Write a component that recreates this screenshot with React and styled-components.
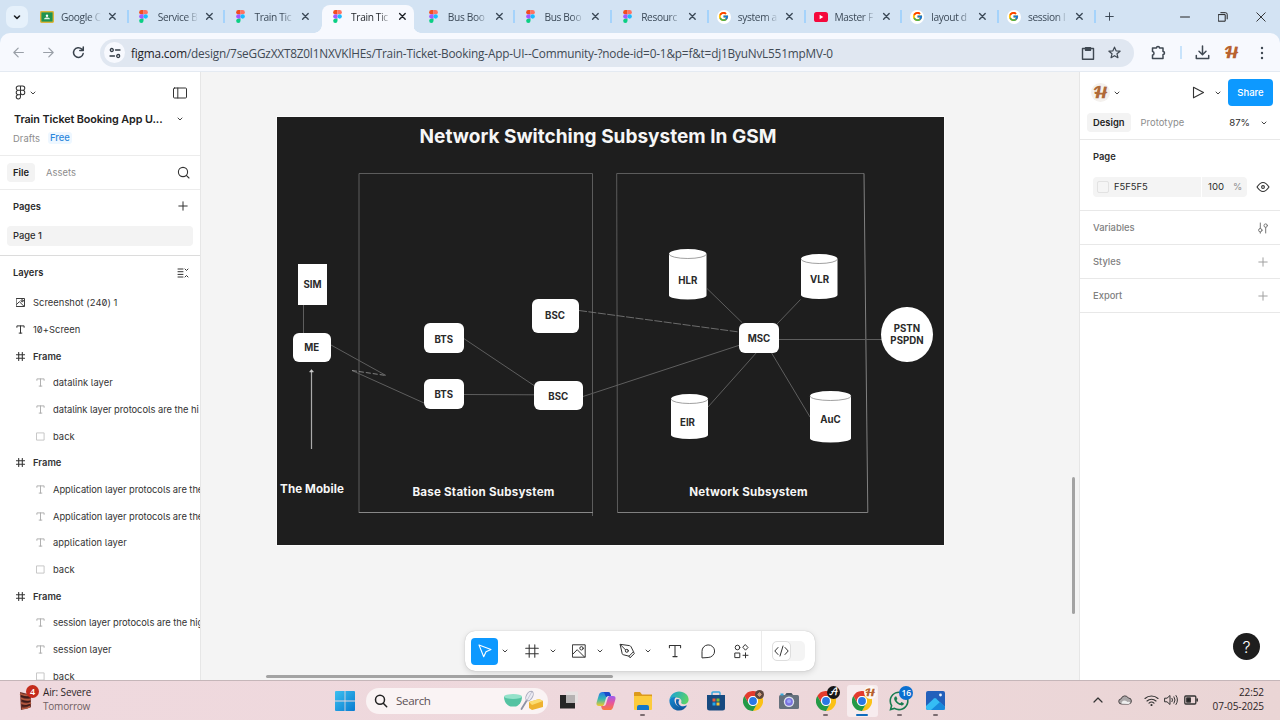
import React from "react";
import styled, { createGlobalStyle, css } from "styled-components";
import { FcGoogle } from "react-icons/fc";
import { FaWhatsapp } from "react-icons/fa";

const Global = createGlobalStyle`
  * { box-sizing: border-box; }
  html, body { margin: 0; padding: 0; overflow: hidden; }
  body { font-family: Inter, "Liberation Sans", sans-serif; color: #2c2c2c; background: #fff; }
  svg { display: block; flex: none; }
`;

const system = css`font-family: "Open Sans", "Noto Sans", sans-serif;`;

const Screen = styled.div`
  width: 1280px; height: 720px; display: flex; flex-direction: column; overflow: hidden; background: #fff;
`;

/* ---------- browser chrome ---------- */

const TabStrip = styled.div`
  height: 33px; flex: none; display: flex; align-items: stretch; background: #d3e3f3; padding-left: 6px;
`;
const TabSearch = styled.div`
  width: 22px; height: 22px; margin-top: 6px; border-radius: 7px; background: #e6f1fb;
  display: flex; align-items: center; justify-content: center;
`;
const TabList = styled.div`display: flex; margin-left: 3px;`;
const Tab = styled.div`
  ${system}
  position: relative; width: 96.7px; height: 33px; display: flex; align-items: center;
  padding: 0 0 0 9px; font-size: 10.2px; letter-spacing: -0.35px; color: #3c4a58;
  ${(p) => !p.$active && !p.$quiet && css`
    &::after { content: ""; position: absolute; right: -1px; top: 10px; width: 2px; height: 13px; background: #a5d3fb; }
  `}
  ${(p) => p.$active && css`
    color: #1f2328;
    &::before { content: ""; position: absolute; left: -7px; right: -3px; bottom: 0; height: 12px;
      background: radial-gradient(circle at 0 0, transparent 7.5px, #f7f9fe 8px) left bottom / 8px 8px no-repeat,
        radial-gradient(circle at 100% 0, transparent 7.5px, #f7f9fe 8px) right bottom / 8px 8px no-repeat; }
  `}
`;
const TabFace = styled.div`
  position: relative; display: flex; align-items: center; height: 28px; margin: 5px 0 0 -8px; padding: 0 0 5px 8px;
  width: 92px; border-radius: 8px 8px 0 0; background: ${(p) => (p.$active ? "#f7f9fe" : "transparent")};
`;
const TabTitle = styled.span`
  width: 42px; margin-left: 7px; white-space: nowrap;
  mask-image: linear-gradient(90deg, #000 66%, transparent 96%);
`;
const TabIcon = styled.span`width: 14px; display: flex; justify-content: center;`;
const TabClose = styled.span`margin-left: 5px; display: flex;`;
const WhiteDisc = styled.span`
  width: 14px; height: 14px; border-radius: 50%; background: #fff; display: flex; align-items: center; justify-content: center;
`;
const NewTab = styled.div`display: flex; align-items: center; padding-left: 10px;`;
const WindowButtons = styled.div`
  margin-left: auto; display: flex; align-items: center; gap: 28px; padding-right: 14px;
`;

const Toolbar = styled.div`
  height: 39px; flex: none; background: #d3e3f3; border-bottom: 1px solid #e4eaf2;
`;
const ToolbarInner = styled.div`
  height: 38px; display: flex; align-items: center; background: #f7f9fe; border-radius: 10px 10px 0 0; padding: 1px 12px 0 12px;
`;
const NavButtons = styled.div`display: flex; align-items: center; gap: 17px; width: 88px;`;
const Omnibox = styled.div`
  ${system}
  height: 28px; width: 1034px; border-radius: 14px; background: #e0e7f1; display: flex; align-items: center; padding: 0 13px 0 4px;
`;
const SiteInfo = styled.span`
  width: 21px; height: 21px; border-radius: 50%; background: #f7f9fe; display: flex; align-items: center; justify-content: center;
`;
const Url = styled.span`
  margin-left: 6px; font-size: 11.8px; letter-spacing: -0.19px; white-space: nowrap; color: #414a54; flex: 1;
  b { font-weight: 400; color: #1f2328; }
`;
const OmniActions = styled.span`display: flex; gap: 13px; align-items: center;`;
const BrowserActions = styled.div`display: flex; align-items: center; margin-left: auto;`;
const ActionRule = styled.span`width: 2px; height: 13px; background: #c8e3fb; margin: 0 13px 0 14px;`;
const Script = styled.span`
  font-family: "DejaVu Serif", "DejaVu Sans", "DejaVu Math TeX Gyre", serif; font-weight: 700; font-size: ${(p) => p.$size}px; line-height: 1;
  color: ${(p) => p.$color || "#b8622f"};
`;

/* ---------- editor ---------- */

const Workspace = styled.div`height: 608px; flex: none; display: flex;`;
const LeftPanel = styled.aside`
  width: 201px; flex: none; border-right: 1px solid #e6e6e6; background: #fff; overflow: hidden; display: flex; flex-direction: column;
`;
const FileHead = styled.div`height: 84px; flex: none; border-bottom: 1px solid #ececec; padding: 0 13px; display: flex; flex-direction: column;`;
const HeadRow = styled.div`display: flex; align-items: center; height: ${(p) => p.$h}px; ${(p) => p.$top && `margin-top:${p.$top}px;`}`;
const Push = styled.span`margin-left: auto; display: flex; align-items: center;`;
const FileName = styled.span`font-size: 10.8px; font-weight: 600; letter-spacing: -0.1px; color: #222; white-space: nowrap; padding-left: 1px;`;
const Muted = styled.span`font-size: ${(p) => p.$size || 9.4}px; color: #8c8c8c; letter-spacing: 0.05px;`;
const FreeBadge = styled.span`
  margin-left: 8px; padding: 0 2px; height: 12px; line-height: 12px; border-radius: 3px; font-size: 9.4px; font-weight: 500; background: #eef7ff; color: #2b86dc;
`;
const PanelTabs = styled.div`height: 34px; flex: none; border-bottom: 1px solid #ececec; display: flex; align-items: center; padding: 0 10px 0 7px;`;
const Pill = styled.span`
  height: 19px; padding: 0 6px; line-height: 19px; border-radius: 4px; background: #f3f3f3; font-size: 9.4px; font-weight: 600; color: #222;
`;
const SectionHead = styled.div`
  height: ${(p) => p.$h}px; flex: none; display: flex; align-items: center; padding: 0 11px 0 13px; font-size: 9.4px; font-weight: 600; color: #2b2b2b;
`;
const PageSection = styled.div`height: 66px; flex: none; border-bottom: 1px solid #dcdcdc;`;
const PageItem = styled.div`
  height: 20px; margin: 4px 7px 0; padding-left: 6px; border-radius: 4px; background: #f3f3f3; line-height: 20px; font-size: 9.4px; font-weight: 500;
`;
const LayerRow = styled.div`
  height: 26.67px; flex: none; display: flex; align-items: center; padding-left: ${(p) => (p.$child ? 34 : 14)}px;
  font-size: 9.4px; font-weight: ${(p) => (p.$frame ? 600 : 400)}; letter-spacing: ${(p) => (p.$long ? -0.06 : 0.03)}px; color: #333; white-space: nowrap;
  font-feature-settings: "cv05", "zero";
`;
const LayerIcon = styled.span`width: 12px; flex: none; margin-right: 7px; display: flex; justify-content: center;`;

const Canvas = styled.main`
  position: relative; flex: 1; background: #f4f4f4; padding: 45px 0 0 76px; overflow: hidden;
`;
const Board = styled.div`position: relative; width: 667px; height: 427.5px; background: #1e1e1e; outline: 1px solid #fafafa;`;
const Wires = styled.svg`position: absolute; inset: 0;`;
const BoardText = styled.div`
  position: absolute; left: ${(p) => p.$x - 277}px; top: ${(p) => p.$y - 117}px; width: ${(p) => p.$w}px; text-align: center;
  transform: translateY(-50%); font-weight: 700; font-size: ${(p) => p.$size}px; line-height: 1.2; color: #f6f6f6; white-space: nowrap;
  letter-spacing: ${(p) => p.$ls || 0}px;
`;
const Node = styled.div`
  position: absolute; left: ${(p) => p.$x - 277}px; top: ${(p) => p.$y - 117}px; width: ${(p) => p.$w}px; height: ${(p) => p.$h}px;
  border-radius: ${(p) => p.$r ?? "6px"}; background: ${(p) => (p.$clear ? "transparent" : "#fff")};
  display: flex; align-items: center; justify-content: center; text-align: center; padding-top: ${(p) => p.$drop ?? 2}px;
  font-size: ${(p) => p.$size || 9.7}px; line-height: 12px; font-weight: 700; color: #2a2a2a; white-space: pre;
`;
const Thumb = styled.div`
  position: absolute; border-radius: 2px; background: #a3a3a3;
  ${(p) => p.$vertical ? "right: 4px; top: 405px; width: 3px; height: 137px;" : "left: 65px; bottom: 2.5px; width: 347px; height: 3px;"}
`;
const ToolDock = styled.div`
  position: absolute; left: 264px; top: 559px; width: 350px; height: 40px; border-radius: 10px; background: #fff;
  box-shadow: 0 0 1px rgba(0,0,0,.28), 0 2px 6px rgba(0,0,0,.13); display: flex; align-items: center; padding-left: 6px;
`;
const Tool = styled.span`
  width: ${(p) => p.$w}px; flex: none; height: 27px; border-radius: 4px; display: flex; align-items: center; justify-content: center;
  margin-left: ${(p) => p.$shift || 0}px;
  background: ${(p) => (p.$active ? "#0d99ff" : "transparent")};
`;
const DockRule = styled.span`width: 1px; height: 40px; background: #ebebeb; margin-left: -6px;`;
const DevToggle = styled.span`
  width: 33px; height: 20px; margin-left: 10px; border-radius: 5px; background: #f4f4f4; display: flex;
`;
const DevKnob = styled.span`
  width: 19px; height: 20px; border-radius: 5px; background: #fff; border: 1px solid #dedede; display: flex; align-items: center; justify-content: center;
`;

const RightPanel = styled.aside`
  position: relative; width: 201px; flex: none; border-left: 1px solid #e6e6e6; background: #fff;
`;
const ShareHead = styled.div`display: flow-root; height: 68px; border-bottom: 1px solid #e8e8e8; padding: 0 7px;`;
const Avatar = styled.span`
  width: 19px; height: 19px; border-radius: 50%; background: #f4f1ee; display: flex; align-items: center; justify-content: center; margin-left: 4px;
`;
const ShareButton = styled.span`
  width: 45px; height: 27px; margin-left: 7px; border-radius: 4px; background: #0d99ff; color: #fff; font-size: 9.5px; font-weight: 500;
  display: flex; align-items: center; justify-content: center;
`;
const Zoom = styled.span`font-size: 9.6px; color: #2b2b2b; margin-right: 11px;`;
const FillSection = styled.div`height: 71px; border-bottom: 1px solid #e8e8e8; padding: 11px 10px 0 13px; font-size: 9.4px; line-height: 12px; font-weight: 600;`;
const FillRow = styled.div`display: flex; align-items: center; margin-top: 14px; line-height: 14px;`;
const FillField = styled.div`
  width: 154px; height: 20px; border-radius: 4px; background: #f4f4f4; display: flex; align-items: center; font-weight: 400; padding-left: 4px;
`;
const Swatch = styled.span`width: 12px; height: 12px; border: 1px solid #e2e2e2; border-radius: 2px; background: #f5f5f5;`;
const Hex = styled.span`margin-left: 5px; width: 87px; font-size: 9.4px;`;
const Opacity = styled.span`border-left: 1px solid #fff; padding-left: 6px; width: 32px; line-height: 20px; font-size: 9.6px;`;
const PropRow = styled.div`
  height: 34px; border-bottom: 1px solid #e8e8e8; padding: 0 12px 0 13px; display: flex; align-items: center; font-size: 9.4px; font-weight: 500; color: #808080;
`;
const Help = styled.div`
  position: absolute; right: 20px; bottom: 20px; width: 27px; height: 27px; border-radius: 50%; background: #1e1e1e; color: #fff;
  display: flex; align-items: center; justify-content: center; font-size: 16px; font-weight: 300;
`;

/* ---------- taskbar ---------- */

const Taskbar = styled.footer`
  ${system}
  height: 40px; flex: none; display: flex; align-items: center; border-top: 1px solid #c5b6b9;
  background: linear-gradient(90deg, #efd9de 0%, #eed8dc 50%, #ead5d5 100%);
`;
const Weather = styled.div`width: 335px; padding: 0 0 2px 17px; display: flex; align-items: center;`;
const WeatherIcon = styled.span`position: relative; width: 23px; height: 26px; display: flex; align-items: flex-end; margin-top: -4px;`;
const CountBadge = styled.span`
  position: absolute; display: flex; align-items: center; justify-content: center; border-radius: 50%; color: #fff; font-weight: 600;
  width: ${(p) => p.$s}px; height: ${(p) => p.$s}px; right: ${(p) => p.$right}px; top: ${(p) => p.$top}px; background: ${(p) => p.$bg};
  font-size: ${(p) => p.$font}px; line-height: 1;
`;
const WeatherText = styled.div`margin-left: 3px; font-size: 10px; letter-spacing: -0.12px; line-height: 13.2px; color: #2d2426; span { display: block; color: #705f63; letter-spacing: -0.2px; }`;
const SearchBox = styled.div`
  width: 182px; height: 26px; margin-left: 11px; border-radius: 13px; background: #faf3f4; display: flex; align-items: center; padding: 0 3px 0 8px;
  font-size: 11.6px; letter-spacing: -0.35px; color: #5c5154;
  span { margin-left: 8px; flex: 1; }
`;
const AppIcon = styled.span`
  position: relative; width: ${(p) => p.$w || 36.6}px; height: 39px; display: flex; align-items: center; justify-content: center;
  ${(p) => p.$mark && css`
    &::after { content: ""; position: absolute; bottom: 4px; width: ${p.$mark === "on" ? 12 : 5}px; height: 2px; border-radius: 1px;
      background: ${p.$mark === "on" ? "#0f6cbd" : "#7b6c70"}; }
  `}
`;
const ActiveTile = styled.span`
  width: 31px; height: 32px; border-radius: 3px; background: #f7ecee; display: flex; align-items: center; justify-content: center;
`;
const Tray = styled.div`margin-left: auto; display: flex; align-items: center; padding: 0 16px 2px 0;`;
const Clock = styled.div`margin-left: 14px; width: 52px; text-align: right; font-size: 10px; letter-spacing: -0.08px; line-height: 13.4px; color: #2d2426; white-space: nowrap;`;

/* ---------- drawings ---------- */

const Line = ({ w = 16, h = w, box = `0 0 ${w} ${h}`, c = "#333", s = 1, d, children, fill = "none" }) => (
  <svg width={w} height={h} viewBox={box} fill={fill} stroke={c} strokeWidth={s} strokeLinecap="round" strokeLinejoin="round">
    {d && <path d={d} />}
    {children}
  </svg>
);
const Caret = ({ c = "#444", size = 6 }) => <Line w={size} box="0 0 6 6" c={c} d="M1 2l2 2 2-2" />;
const Plus = ({ c = "#333", size = 10 }) => <Line w={size} box="0 0 10 10" c={c} d="M5 .8v8.4M.8 5h8.4" />;
const Cross = ({ c }) => <Line w={9} box="0 0 9 9" c={c} s={1.4} d="M1.6 1.6l5.6 5.600M7.200 1.600l-5.600 5.600" />;

const FigmaLogo = () => (
  <svg width="9" height="13" viewBox="0 0 8 12">
    <path d="M4 0H2a2 2 0 000 4h2z" fill="#f24e1e" />
    <path d="M4 0h2a2 2 0 010 4H4z" fill="#ff7262" />
    <path d="M4 4H2a2 2 0 000 4h2z" fill="#a259ff" />
    <circle cx="6" cy="6" r="2" fill="#1abcfe" />
    <path d="M4 8H2a2 2 0 102 2z" fill="#0acf83" />
  </svg>
);
const Classroom = () => (
  <svg width="14" height="12" viewBox="0 0 14 12">
    <rect width="14" height="12" rx="1.4" fill="#dcb43a" />
    <rect x="1.4" y="1.4" width="11.2" height="9.2" fill="#1f9350" />
    <circle cx="7" cy="4.7" r="1.2" fill="#fff" />
    <path d="M4 8.2c0-2.3 6-2.3 6 0z" fill="#e5f4e9" />
  </svg>
);
const YouTube = () => (
  <svg width="14" height="10" viewBox="0 0 14 10"><rect width="14" height="10" rx="2.6" fill="#f5093c" /><path d="M5.6 2.8v4.4L9.3 5z" fill="#fff" /></svg>
);
const Chrome = ({ size = 20 }) => {
  const wedge = "M1.6 6A12 12 0 0122.4 6H12A6 6 0 006.8 15z";
  return (
    <svg width={size} height={size} viewBox="0 0 24 24">
      <path d={wedge} fill="#e33b2e" />
      <path d={wedge} fill="#fbc116" transform="rotate(120 12 12)" />
      <path d={wedge} fill="#249a46" transform="rotate(240 12 12)" />
      <circle cx="12" cy="12" r="6" fill="#fff" /><circle cx="12" cy="12" r="4.7" fill="#2a78e4" />
    </svg>
  );
};
const WinLogo = () => (
  <svg width="20" height="20" viewBox="0 0 20 20">
    <defs><linearGradient id="win" x1="0" y1="0" x2="1" y2="1" gradientUnits="objectBoundingBox"><stop stopColor="#3cc0f0" /><stop offset="1" stopColor="#087bd0" /></linearGradient></defs>
    <path d="M0 1q0-1 1-1h8.6v9.6H0zM10.4 0H19q1 0 1 1v8.6h-9.6zM0 10.4h9.6V20H1q-1 0-1-1zM10.4 10.4H20V19q0 1-1 1h-8.600z" fill="url(#win)" />
  </svg>
);
const SearchArt = () => (
  <svg width="42" height="22" viewBox="0 0 42 22">
    <path d="M1 6.500h18c0 5.500-3 9-6 10H7.500C4 15.500 1 12 1 6.500z" fill="#54c3a2" /><ellipse cx="10" cy="6.500" rx="9" ry="2.400" fill="#94e2ca" />
    <path d="M18.500 19l5.500-9" stroke="#8d93a6" strokeWidth="1.800" strokeLinecap="round" />
    <ellipse cx="26.500" cy="6" rx="3.100" ry="5.200" transform="rotate(30 26.500 6)" fill="#ecebf3" stroke="#a9aabc" strokeWidth=".9" />
    <path d="M24 10.500l5-9" stroke="#a9aabc" strokeWidth=".6" />
    <path d="M26 12l10-3 4 2v6l-11 3-3-2z" fill="#eeb22f" /><path d="M26 12l10-3 4 2-11 4z" fill="#fbdc70" />
  </svg>
);
const TaskView = () => (
  <svg width="19" height="19" viewBox="0 0 19 19"><path d="M1 4h15v13.500H1z" fill="#262626" /><path d="M7 .5h12v11.500H7z" fill="#e6e1e1" /><path d="M7 4h9v8H7z" fill="#b5b2b2" /></svg>
);
const Copilot = () => (
  <svg width="20" height="20" viewBox="0 0 20 20">
    <defs>
      <linearGradient id="cpa" x1="0" y1="0" x2="0" y2="1"><stop stopColor="#2477e8" /><stop offset=".5" stopColor="#35b7b4" /><stop offset="1" stopColor="#f3c928" /></linearGradient>
      <linearGradient id="cpb" x1="0" y1="0" x2="0" y2="1"><stop stopColor="#9c5cf0" /><stop offset=".5" stopColor="#e8569b" /><stop offset="1" stopColor="#fa7a3d" /></linearGradient>
    </defs>
    <path d="M6.500 1H12c1.400 0 2 .8 2.400 2l.5 2h-2.500c-1.400 0-2 .8-2.400 2L8.200 13c-.5 1.500-1.200 2-2.400 2H3c-2 0-3-1.200-2.400-3.400l2.400-8C3.500 2 4.700 1 6.500 1z" fill="url(#cpa)" />
    <path d="M13.500 19H8c-1.400 0-2-.8-2.400-2l-.5-2h2.500c1.400 0 2-.8 2.400-2l1.800-6c.5-1.500 1.200-2 2.400-2H17c2 0 3 1.200 2.400 3.400l-2.400 8c-.5 1.600-1.700 2.600-3.500 2.600z" fill="url(#cpb)" />
    <path d="M6.500 1H12c1.400 0 2 .8 2.400 2l.5 2h-2.500c-1 0-1.700.5-2.100 1.300L9 4C8.600 2 8 1 6.500 1z" fill="#1c49c8" />
  </svg>
);
const Folder = () => (
  <svg width="20" height="20" viewBox="0 0 20 20"><path d="M1 2q0-1 1-1h5l2 2.500h10V8H1z" fill="#dc9a1b" /><path d="M1 5h17q1 0 1 1v12q0 1-1 1H2q-1 0-1-1z" fill="#fccb3c" /><path d="M4 19v-3q0-2 2-2h8q2 0 2 2v3z" fill="#1477c9" /></svg>
);
const Edge = () => (
  <svg width="20" height="20" viewBox="0 0 20 20">
    <defs>
      <linearGradient id="ea" x1="0" y1=".2" x2="1" y2=".5"><stop stopColor="#1aa0d8" /><stop offset="1" stopColor="#5ad468" /></linearGradient>
      <linearGradient id="eb" x1="0" y1="0" x2="1" y2="1"><stop stopColor="#1389d4" /><stop offset="1" stopColor="#114a8b" /></linearGradient>
    </defs>
    <path d="M.4 9C1 4 5 .4 10 .4c5.700 0 9.600 3.800 9.600 8 0 3-2.200 4.800-4.800 4.800-2 0-3-.8-2.600-1.600.7-1.300.2-4.200-3.500-4.800C5 6.200 1.500 7 .4 9z" fill="url(#ea)" />
    <path d="M.4 9C1.200 7 4 5.800 6.800 6.200 4 8 5.600 15.500 12 15.800c2 .1 4-.8 5.800-1.600C16.500 17.500 13.500 19.600 10 19.600 4.500 19.600.2 15.200.4 9z" fill="url(#eb)" />
    <path d="M7.500 8c-1.700 4 .8 9 6.500 8.800 1.500 0 3-.8 4-2-5 2.200-8.500-.6-8.500-3.200 0-1.500.5-2 1-3z" fill="#0c61ae" />
  </svg>
);
const Store = () => (
  <svg width="20" height="20" viewBox="0 0 20 20"><path d="M6 5V2q0-1 1-1h6q1 0 1 1v3" fill="none" stroke="#39a8df" strokeWidth="1.400" /><path d="M1 4h18v13q0 2.500-2.500 2.500h-13Q1 19.500 1 17z" fill="#174a80" /><path d="M6.500 7.500h3v3h-3z" fill="#ee5a3a" /><path d="M10.500 7.500h3v3h-3z" fill="#7bbf35" /><path d="M6.500 11.500h3v3h-3z" fill="#26a7e8" /><path d="M10.500 11.500h3v3h-3z" fill="#fac231" /></svg>
);
const Camera = () => (
  <svg width="20" height="18" viewBox="0 0 20 18"><path d="M6 3l1.500-2h5L14 3z" fill="#4b5763" /><rect y="3" width="20" height="14" rx="1.500" fill="#66717d" /><rect x="1.500" y="1.500" width="3" height="2" fill="#36a9dc" /><circle cx="10" cy="9.800" r="5.200" fill="#dde3ee" /><circle cx="10" cy="9.800" r="3.900" fill="#7b73df" /><circle cx="10" cy="9.300" r="2" fill="#9ba7f8" /></svg>
);
const Photos = () => (
  <svg width="19" height="19" viewBox="0 0 19 19"><rect width="19" height="19" rx="2" fill="#2360bb" /><path d="M0 15L8 7.500q1-.9 2 0l9 8.500v1q0 2-2 2H2q-2 0-2-2z" fill="#35bdf5" /><path d="M5 19l9-8 5 5v1q0 2-2 2z" fill="#1889dc" /><circle cx="14.500" cy="4" r="1.400" fill="#e8f3ff" /></svg>
);
const AirArt = () => (
  <svg width="17" height="20" viewBox="0 0 18 22"><path d="M3 1l12 3v14l-11 3z" fill="#6d3029" /><path d="M3 3q6 3 12 1M4 8q6 3 11 1M4 13q6 3 11 0M5 19q5 1 9-2" stroke="#b3593f" strokeWidth="1.800" fill="none" /><path d="M4 5.500q5 2 10 1M5 10.500q5 2 9 1M5 16q5 1 9-1" stroke="#3c1c1a" strokeWidth="1.500" fill="none" /></svg>
);

const HashIcon = ({ size = 9, c = "#333", s = 1.1 }) => <Line w={size} box="0 0 10 10" c={c} s={s} d="M3 .5v9M7 .5v9M.5 3h9M.5 7h9" />;
const TextGlyph = ({ size = 9, c = "#333", s = 1 }) => <Line w={size} box="0 0 10 10" c={c} s={s} d="M1 2.600V1h8v1.600M5 1v8M3.500 9h3" />;
const PictureIcon = ({ size = 9, s = 1 }) => (
  <Line w={size} box="0 0 14 14" s={s} d="M.8.8h12.400v12.400H.8zM1 10l4.200-4.300 7.300 7.300"><circle cx="9.500" cy="4.300" r="1.700" /></Line>
);
const SquareIcon = () => <Line w={9} box="0 0 10 10" c="#c2c2c2" s={1} d="M1 1h8v8H1z" />;

/* ---------- content ---------- */

const tabs = [
  ["class", "Google C"], ["figma", "Service B"], ["figma", "Train Tic"], ["figma", "Train Tic", true],
  ["figma", "Bus Boo"], ["figma", "Bus Boo"], ["figma", "Resourc"], ["google", "system a"],
  ["youtube", "Master F"], ["google", "layout d"], ["google", "session l"],
];
const tabIcons = {
  class: <Classroom />, figma: <FigmaLogo />, youtube: <YouTube />, google: <WhiteDisc><FcGoogle size={11} /></WhiteDisc>,
};
const layers = [
  ["image", "Screenshot (240) 1"], ["text", "10+Screen"],
  ["frame", "Frame"], ["t", "datalink layer"], ["t", "datalink layer protocols are the hi"], ["r", "back"],
  ["frame", "Frame"], ["t", "Application layer protocols are the"], ["t", "Application layer protocols are the"],
  ["t", "application layer"], ["r", "back"],
  ["frame", "Frame"], ["t", "session layer protocols are the hig"], ["t", "session layer"], ["r", "back"],
];
const layerIcons = {
  image: <PictureIcon s={1.5} />, text: <TextGlyph s={1.1} />, frame: <HashIcon s={1.2} />, t: <TextGlyph c="#a8a8a8" />, r: <SquareIcon />,
};

function BrowserTop() {
  return (
    <>
      <TabStrip>
        <TabSearch><Line w={8} box="0 0 8 8" c="#1f2328" s={1.6} d="M1.500 3L4 5.300 6.500 3" /></TabSearch>
        <TabList>
          {tabs.map(([icon, title, active], i) => (
            <Tab key={i} $active={active} $quiet={i === 2}>
              <TabFace $active={active}>
                <TabIcon>{tabIcons[icon]}</TabIcon>
                <TabTitle>{title}</TabTitle>
                <TabClose><Cross c={active ? "#1f2328" : "#3c4a58"} /></TabClose>
              </TabFace>
            </Tab>
          ))}
        </TabList>
        <NewTab><Plus c="#2f3b48" size={9} /></NewTab>
        <WindowButtons>
          <Line w={10} d="M.5 5h9" c="#222" />
          <Line w={10} c="#222" d="M.6 2.600h6.600v6.600H.600zM2.800.7h4.700q1.700 0 1.700 1.700v4.500" />
          <Line w={10} c="#222" s={0.9} d="M.8.8l8.400 8.400M9.200.8L.8 9.200" />
        </WindowButtons>
      </TabStrip>
      <Toolbar>
        <ToolbarInner>
          <NavButtons>
            <Line w={13} box="0 0 12 12" c="#999fa7" s={1.1} d="M10.500 6H1.800M5.700 2L1.700 6l4 4" />
            <Line w={13} box="0 0 12 12" c="#999fa7" s={1.1} d="M1.500 6h8.700M6.300 2l4 4-4 4" />
            <Line w={13} box="0 0 12 12" c="#3a434d" s={1.4} d="M10.300 7A4.500 4.500 0 119 2.800l1.200 1.200M10.400 1v3.200H7.200" />
          </NavButtons>
          <Omnibox>
            <SiteInfo><Line w={12} box="0 0 12 12" c="#333c46" s={1.3} d="M6.500 3H11M1 9h4.500"><circle cx="2.800" cy="3" r="1.500" /><circle cx="9.200" cy="9" r="1.500" /></Line></SiteInfo>
            <Url><b>figma.com</b>/design/7seGGzXXT8Z0l1NXVKlHEs/Train-Ticket-Booking-App-UI--Community-?node-id=0-1&amp;p=f&amp;t=dj1ByuNvL551mpMV-0</Url>
            <OmniActions>
              <Line w={14} box="0 0 14 14" c="#3f4852" s={1.4} d="M1.500 2.500h11v10.700h-11z"><path d="M4.500 1.800h5v2.400h-5z" fill="#3f4852" /></Line>
              <Line w={13} box="0 0 14 14" c="#3f4852" s={1.3} d="M7 1.200l1.700 4 4.300.4-3.300 2.800 1 4.200L7 10.400l-3.700 2.200 1-4.200L1 5.600l4.300-.4z" />
            </OmniActions>
          </Omnibox>
          <BrowserActions>
            <Line w={15} box="0 0 15 15" c="#3f4852" s={1.5} d="M1.500 3h4c0-2 3-2 3 0h3.500v3.500c2 0 2 3 0 3v4H1.500V10c2 0 2-3.500 0-3.500z" />
            <ActionRule />
            <Line w={15} box="0 0 15 15" c="#3f4852" s={1.5} d="M7.500 1v8.500M4 6.300l3.500 3.500L11 6.300M1.300 10.500v3h12.400v-3" />
            <Script $size={14} style={{ marginLeft: 14 }}>𝓗</Script>
            <svg width="4" height="14" viewBox="0 0 4 14" fill="#3f4852" style={{ marginLeft: 21, marginRight: 4 }}><circle cx="2" cy="2" r="1.200" /><circle cx="2" cy="7" r="1.200" /><circle cx="2" cy="12" r="1.200" /></svg>
          </BrowserActions>
        </ToolbarInner>
      </Toolbar>
    </>
  );
}

function Layers() {
  return (
    <LeftPanel>
      <FileHead>
        <HeadRow $h={15} $top={13}>
          <Line w={15} box="0 0 14 14" s={0.95} d="M7 1H5a2 2 0 000 4h2zM7 1h2a2 2 0 010 4H7zM7 5H5a2 2 0 000 4h2zM7 5h2a2 2 0 010 4 2 2 0 01-2-2zM7 9H5a2 2 0 102 2z" />
          <Push style={{ marginLeft: 2 }}><Caret /></Push>
          <Push><Line w={14} h={12} box="0 0 14 12" d="M1.500 1h11q1 0 1 1v8q0 1-1 1h-11q-1 0-1-1V2q0-1 1-1zM4.800 1v10" /></Push>
        </HeadRow>
        <HeadRow $h={16} $top={11}><FileName>Train Ticket Booking App U...</FileName><Push style={{ marginRight: 4 }}><Caret /></Push></HeadRow>
        <HeadRow $h={14} $top={4}><Muted>Drafts</Muted><FreeBadge>Free</FreeBadge></HeadRow>
      </FileHead>
      <PanelTabs>
        <Pill>File</Pill><Muted style={{ marginLeft: 11 }}>Assets</Muted>
        <Push><Line w={13} box="0 0 13 13" s={1.1} d="M9.300 9.300l2.700 2.700"><circle cx="6" cy="6" r="4.600" /></Line></Push>
      </PanelTabs>
      <PageSection>
        <SectionHead $h={32}>Pages<Push style={{ marginRight: 1 }}><Plus /></Push></SectionHead>
        <PageItem>Page 1</PageItem>
      </PageSection>
      <SectionHead $h={33.6}>
        Layers<Push><Line w={12} box="0 0 12 12" d="M1 2h5M1 4.700h5M1 7.400h5M1 10h5M8 2l1.500 1.500L11 2M8 10l1.500-1.500L11 10" /></Push>
      </SectionHead>
      {layers.map(([kind, name], i) => (
        <LayerRow key={i} $child={kind === "t" || kind === "r"} $frame={kind === "frame"} $long={name.length > 30}>
          <LayerIcon>{layerIcons[kind]}</LayerIcon>{name}
        </LayerRow>
      ))}
    </LeftPanel>
  );
}

const Drum = ({ x, y, w, h }) => (
  <g>
    <path d={`M${x} ${y + 5}a${w / 2} 5 0 01${w} 0V${y + h - 4}a${w / 2} 4 0 01${-w} 0z`} fill="#fff" />
    <path d={`M${x} ${y + 5}a${w / 2} 4.500 0 00${w} 0`} fill="none" stroke="#777" strokeWidth=".7" />
  </g>
);

function Diagram() {
  return (
    <Board>
      <Wires width="667" height="428" viewBox="277 117 667 428">
        <g fill="none" stroke="#5e5e5e" strokeWidth="1">
          <path d="M359 513V173.500H592.500V516" stroke="#5c5c5c" />
          <path d="M359 512.500H593" stroke="#888" />
          <path d="M617.500 512.500L616.700 173.500H864" stroke="#5c5c5c" />
          <path d="M864 173.500L867.800 512.500H617.500" stroke="#808080" />
          <path d="M303.500 305v28" />
          <path d="M311.500 449V370" stroke="#aaa" strokeWidth="1.200" />
          <path d="M309.500 372l2-2.500 2 2.500z" fill="#ccc" stroke="#ccc" strokeWidth=".5" />
          <path d="M331 345L386 375.500M352 370.500l72 32.500M463 338l71 47.500M463 394.500l71 .3M583 396.500L740 345M707 288.500l35 34M800.500 299.500L777 324M779 339.500h103M757 352l-49 55M771 352l39 65" />
          <path d="M352 370.500l34 5" stroke="#999" strokeWidth=".8" strokeDasharray="5 2" />
          <path d="M579 310.500l160 21.500" stroke="#808080" strokeWidth=".8" strokeDasharray="8 1.500" />
        </g>
        <Drum x={669} y={249} w={37.5} h={50.5} />
        <Drum x={801} y={254} w={36.5} h={45} />
        <Drum x={671} y={394} w={37} h={45} />
        <Drum x={810} y={391} w={41} h={51.5} />
      </Wires>
      <BoardText $x={398} $y={137} $w={400} $size={19.05}>Network Switching Subsystem In GSM</BoardText>
      <BoardText $x={271} $y={490} $w={82} $size={11.6} $ls={0.08}>The Mobile</BoardText>
      <BoardText $x={403.5} $y={492.5} $w={160} $size={11.6} $ls={0.22}>Base Station Subsystem</BoardText>
      <BoardText $x={668.5} $y={492.5} $w={160} $size={11.6} $ls={0.2}>Network Subsystem</BoardText>
      <Node $x={298} $y={263.5} $w={29} $h={41.5} $r="0">SIM</Node>
      <Node $x={292.5} $y={332.5} $w={38.5} $h={29.5}>ME</Node>
      <Node $x={424} $y={323} $w={39.5} $h={29.5} $drop={5}>BTS</Node>
      <Node $x={424} $y={379} $w={39.5} $h={29.5}>BTS</Node>
      <Node $x={531.5} $y={298.5} $w={47} $h={34} $drop={1}>BSC</Node>
      <Node $x={534} $y={380.5} $w={48.5} $h={29.5} $drop={4}>BSC</Node>
      <Node $x={739} $y={323} $w={40} $h={29.5}>MSC</Node>
      <Node $clear $x={669} $y={273} $w={37.5} $h={14}>HLR</Node>
      <Node $clear $x={801} $y={271.5} $w={37} $h={14}>VLR</Node>
      <Node $clear $x={669} $y={415} $w={37} $h={14}>EIR</Node>
      <Node $clear $x={810} $y={412} $w={41} $h={14}>AuC</Node>
      <Node $x={881} $y={306.5} $w={52} $h={55.5} $r="50%">{"PSTN\nPSPDN"}</Node>
    </Board>
  );
}

function Dock() {
  return (
    <ToolDock>
      <Tool $active $w={27}><Line w={16} box="0 0 16 16" c="#fff" s={1.1} d="M2 2l12 4.400-5 2.300-2.300 5z" /></Tool>
      <Tool $w={14}><Caret /></Tool>
      <Tool $w={40}><HashIcon size={14} s={0.75} /></Tool>
      <Tool $w={1}><Caret /></Tool>
      <Tool $w={52}><PictureIcon size={14} s={1} /></Tool>
      <Tool $w={0} $shift={-5}><Caret /></Tool>
      <Tool $w={54}><Line w={16} box="0 0 16 16" d="M1.200 1.700l2 9q.2.800 1 1l5.800 1.500 4.500-4.500-2.500-5q-.4-.8-1.200-1zM1.500 1.800L6.500 6.800M10 13.200l1 1.600 4.400-4.300-1-1.500"><circle cx="7.800" cy="7.800" r="1.500" /></Line></Tool>
      <Tool $w={0} $shift={-6}><Caret /></Tool>
      <Tool $w={54}><TextGlyph size={14} s={0.75} /></Tool>
      <Tool $w={13}><Line w={15} box="0 0 15 15" d="M1 13.500V7.500A6.300 6.300 0 117.500 13.500z" /></Tool>
      <Tool $w={52}><Line w={15} box="0 0 15 15" d="M1.200 9h4.600v4.600H1.200zM11.500 8.800v5M9 11.300h5M11.500.8l2.500 2.700-2.500 2.700L9 3.500z"><circle cx="3.500" cy="3.500" r="2.300" /></Line></Tool>
      <DockRule />
      <DevToggle><DevKnob><Line w={15} h={12} box="0 0 15 12" d="M4 2.500L.8 6 4 9.500M11 2.500L14.200 6 11 9.500M9 1L6 11" /></DevKnob></DevToggle>
    </ToolDock>
  );
}

function Inspector() {
  return (
    <RightPanel>
      <ShareHead>
        <HeadRow $h={27} $top={7}>
          <Avatar><Script $size={14} $color="#b06a38">𝓗</Script></Avatar>
          <Push style={{ marginLeft: 4 }}><Caret /></Push>
          <Push><Line w={13} box="0 0 13 13" s={1.1} d="M1.500 1.200L11.500 6.500 1.500 11.800z" /></Push>
          <Push style={{ marginLeft: 10 }}><Caret /></Push>
          <ShareButton>Share</ShareButton>
        </HeadRow>
        <HeadRow $h={19} $top={7}>
          <Pill>Design</Pill><Muted style={{ marginLeft: 10 }}>Prototype</Muted>
          <Push><Zoom>87%</Zoom><span style={{ marginRight: 6 }}><Caret /></span></Push>
        </HeadRow>
      </ShareHead>
      <FillSection>
        Page
        <FillRow>
          <FillField><Swatch /><Hex>F5F5F5</Hex><Opacity>100</Opacity><Muted>%</Muted></FillField>
          <Push><Line w={14} h={12} box="0 0 14 12" s={1.1} d="M1 6q6-9 12 0-6 9-12 0z"><circle cx="7" cy="6" r="1.400" /></Line></Push>
        </FillRow>
      </FillSection>
      <PropRow>Variables<Push style={{ marginRight: -1 }}><Line w={12} box="0 0 12 12" c="#777" d="M3.300 1v5.500M3.300 10v1.200M8.700 5.500V11"><circle cx="3.300" cy="8.200" r="1.700" /><circle cx="8.700" cy="3.600" r="1.700" /></Line></Push></PropRow>
      <PropRow>Styles<Push><Plus c="#a0a0a0" /></Push></PropRow>
      <PropRow>Export<Push><Plus c="#a0a0a0" /></Push></PropRow>
      <Help>?</Help>
    </RightPanel>
  );
}

function WindowsBar() {
  return (
    <Taskbar>
      <Weather>
        <WeatherIcon><AirArt /><CountBadge $s={13} $right={1} $top={0} $bg="#c42b1c" $font={9}>4</CountBadge></WeatherIcon>
        <WeatherText>Air: Severe<span>Tomorrow</span></WeatherText>
      </Weather>
      <WinLogo />
      <SearchBox>
        <Line w={14} box="0 0 14 14" c="#222" s={1.5} d="M9.500 9.500l3.200 3.200"><circle cx="6" cy="5.800" r="4.500" /></Line>
        <span>Search</span><SearchArt />
      </SearchBox>
      <AppIcon $w={40}><TaskView /></AppIcon>
      <AppIcon><Copilot /></AppIcon>
      <AppIcon $mark="idle"><Folder /></AppIcon>
      <AppIcon><Edge /></AppIcon>
      <AppIcon><Store /></AppIcon>
      <AppIcon><Chrome /><CountBadge $s={9} $right={7} $top={9} $bg="radial-gradient(#c99a7c 30%, #5d463d 35%)" $font={1} /></AppIcon>
      <AppIcon><Camera /></AppIcon>
      <AppIcon $mark="idle"><Chrome /><CountBadge $s={13} $right={4} $top={5} $bg="#161616" $font={8}><Script $size={9} $color="#fff">𝒜</Script></CountBadge></AppIcon>
      <AppIcon $mark="on"><ActiveTile><Chrome /></ActiveTile><CountBadge $s={13} $right={4} $top={5} $bg="#fdf8f4" $font={8}><Script $size={10}>𝓗</Script></CountBadge></AppIcon>
      <AppIcon $mark="idle"><FaWhatsapp size={22} color="#177c50" /><CountBadge $s={14} $right={4} $top={5} $bg="#0b6fd0" $font={8.5}>16</CountBadge></AppIcon>
      <AppIcon $mark="idle"><Photos /></AppIcon>
      <Tray>
        <Line w={10} box="0 0 10 10" s={1.2} d="M1 7l4-4 4 4" />
        <svg width="14" height="10" viewBox="0 0 14 10" style={{ marginLeft: 15 }}><path d="M3.500 9a2.600 2.600 0 01-.3-5.200A3.800 3.800 0 0110.300 3a3 3 0 01.2 6z" fill="#aaa6a7" stroke="#494344" strokeWidth="1" /><path d="M3.500 8.700q0-3 3-3.200 2 0 3 1.500 2-.8 3 1L10.500 9z" fill="#eee" /></svg>
        <span style={{ marginLeft: 12 }}><Line w={15} h={12} box="0 0 15 12" s={1.1} d="M1 4.500a9.500 9.500 0 0113 0M3 7a6.500 6.500 0 019 0M5 9.200a3.600 3.600 0 015 0"><circle cx="7.500" cy="11" r=".5" /></Line></span>
        <span style={{ marginLeft: 5 }}><Line w={14} h={12} box="0 0 14 12" d="M1 4.200h2L6 1.500v9L3 7.800H1zM8 4.300q1.200 1.700 0 3.400M10 2.800q2.200 3.200 0 6.400M12 1.500q3 4.500 0 9" /></span>
        <span style={{ marginLeft: 6 }}><Line w={14} h={10} box="0 0 14 10" s={1.3} d="M1.800 1h9q1 0 1 1v6q0 1-1 1h-9q-1 0-1-1V2q0-1 1-1zM13.300 4v2"><path d="M2.800 3h3.500v4H2.800z" fill="#222" /></Line></span>
        <Clock>22:52<br />07-05-2025</Clock>
      </Tray>
    </Taskbar>
  );
}

export default function App() {
  return (
    <Screen>
      <Global />
      <BrowserTop />
      <Workspace>
        <Layers />
        <Canvas>
          <Diagram />
          <Thumb $vertical />
          <Thumb />
          <Dock />
        </Canvas>
        <Inspector />
      </Workspace>
      <WindowsBar />
    </Screen>
  );
}
